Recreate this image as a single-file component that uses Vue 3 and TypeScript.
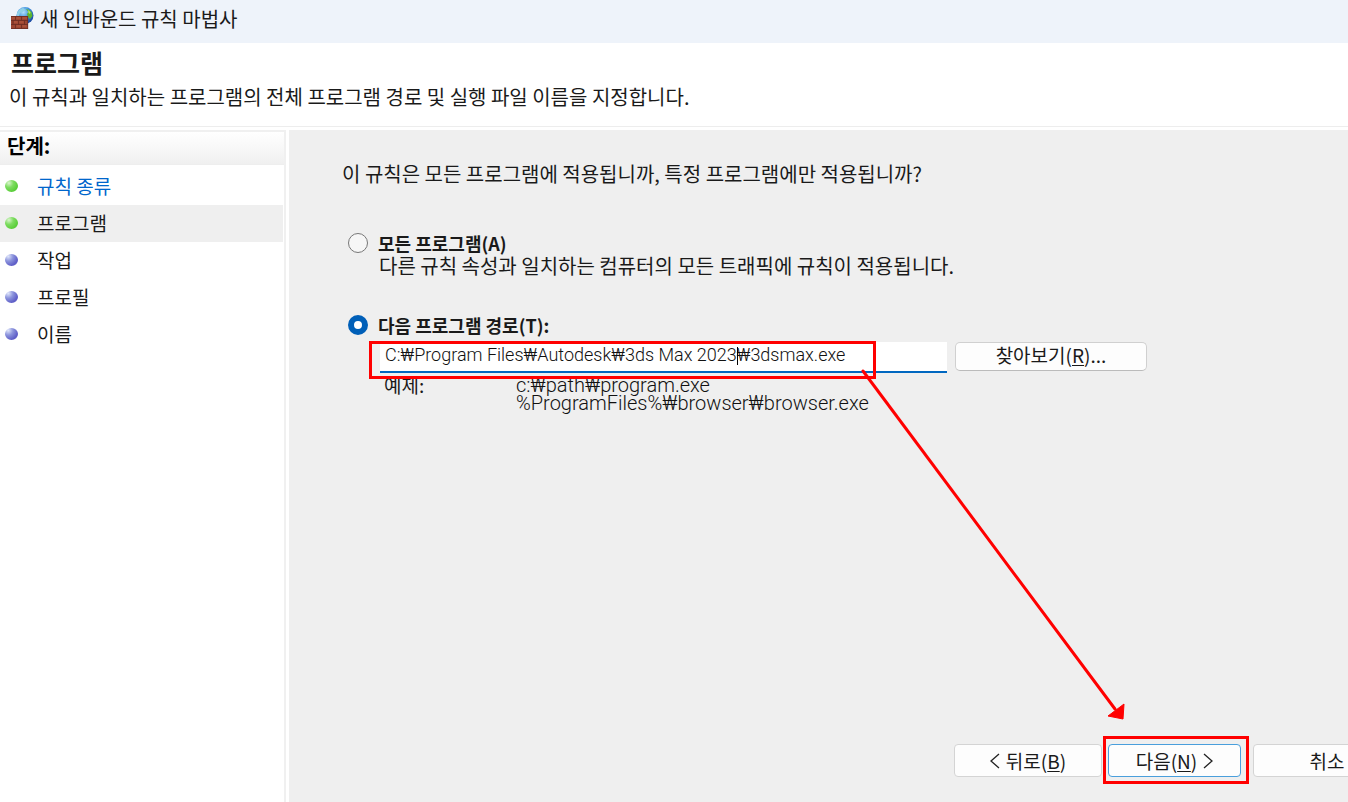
<script setup lang="ts">
import { ref } from 'vue'

interface Step {
  label: string
  state: 'done' | 'todo'
  link?: boolean
  current?: boolean
}

const steps: Step[] = [
  { label: '규칙 종류', state: 'done', link: true },
  { label: '프로그램', state: 'done', current: true },
  { label: '작업', state: 'todo' },
  { label: '프로필', state: 'todo' },
  { label: '이름', state: 'todo' },
]

const target = ref<'all' | 'path'>('path')
const programPath = ref('C:₩Program Files₩Autodesk₩3ds Max 2023₩3dsmax.exe')
</script>

<template>
  <div class="wizard">
    <header class="titlebar">
      <svg class="app-icon" viewBox="0 0 24 24" aria-hidden="true">
        <defs>
          <radialGradient id="globe" cx="0.4" cy="0.3" r="0.75">
            <stop offset="0" stop-color="#b4e2fb" />
            <stop offset="0.5" stop-color="#3a8fdb" />
            <stop offset="1" stop-color="#123a96" />
          </radialGradient>
        </defs>
        <circle cx="15" cy="8.500" r="8.500" fill="url(#globe)" />
        <path d="M7 6 Q9 2 13 1 L15 2.500 L13 5 L10 6 L9 9 L7 9Z" fill="#8fd0e8" />
        <path d="M16 2 Q19 2 21.500 5 L22.500 9 L20 12 L18 10 L17 7 L18.500 5Z" fill="#5cb531" />
        <path d="M18 3 L20.500 5 L20 7 L18.500 6Z" fill="#b5e36b" />
        <rect x="1" y="9" width="17" height="13" fill="#9c4531" />
        <path d="M1 9.500H18M1 13.500H18M1 17.500H18M1 21.500H18M5.500 9.500V13M11.500 9.500V13M3 13.500V17.500M8.500 13.500V17.500M14.500 13.500V17.500M5.500 17.500V21.500M11.500 17.500V21.500M17.700 9V22" stroke="#6a2c22" stroke-width="0.8" fill="none" />
        <path d="M2 11H5M6.500 11H10.500M12.500 11H17M4 15H7.500M9.500 15H13.500M6.500 19H10.500M12.500 19H16.500" stroke="#bd6248" stroke-width="0.8" />
      </svg>
      <span class="title">새 인바운드 규칙 마법사</span>
    </header>

    <section class="heading">
      <h1>프로그램</h1>
      <p>이 규칙과 일치하는 프로그램의 전체 프로그램 경로 및 실행 파일 이름을 지정합니다.</p>
    </section>

    <div class="body">
      <nav class="steps" aria-label="단계">
        <h2>단계:</h2>
        <ul>
          <li v-for="step in steps" :key="step.label" :class="{ current: step.current }">
            <span class="dot" :class="step.state"></span>
            <a v-if="step.link" href="#">{{ step.label }}</a>
            <span v-else>{{ step.label }}</span>
          </li>
        </ul>
      </nav>

      <main class="content">
        <p class="question">이 규칙은 모든 프로그램에 적용됩니까, 특정 프로그램에만 적용됩니까?</p>

        <div class="option first">
          <input id="all" v-model="target" type="radio" name="target" value="all" />
          <label for="all">모든 프로그램(A)</label>
        </div>
        <p class="hint">다른 규칙 속성과 일치하는 컴퓨터의 모든 트래픽에 규칙이 적용됩니다.</p>

        <div class="option second">
          <input id="path" v-model="target" type="radio" name="target" value="path" />
          <label for="path">다음 프로그램 경로(T):</label>
        </div>

        <div class="path-row">
          <div class="field">
            <input v-model="programPath" type="text" aria-label="프로그램 경로" spellcheck="false" />
            <span class="caret"></span>
            <span class="mark mark-path"></span>
          </div>
          <button type="button" class="browse"><span>찾아보기(<u>R</u>)...</span></button>
        </div>

        <dl class="examples">
          <dt>예제:</dt>
          <dd>c:₩path₩program.exe<br />%ProgramFiles%₩browser₩browser.exe</dd>
        </dl>

        <footer class="actions">
          <button type="button" class="back">
            <svg viewBox="0 0 10 16" aria-hidden="true"><path d="M9 1L1 8L9 15" /></svg>
            <span>뒤로(<u>B</u>)</span>
          </button>
          <div class="next-wrap">
            <button type="button" class="next">
              <span>다음(<u>N</u>)</span>
              <svg viewBox="0 0 10 16" aria-hidden="true"><path d="M1 1L9 8L1 15" /></svg>
            </button>
            <span class="mark mark-next"></span>
          </div>
          <button type="button" class="cancel">취소</button>
        </footer>

        <svg class="arrow" viewBox="0 0 264 352" aria-hidden="true">
          <path d="M2 2L254 340" stroke="#ff0000" stroke-width="3" fill="none" stroke-linecap="round" />
          <path d="M247 347L263 335L262 350Z" fill="#ff0000" stroke="#ff0000" />
        </svg>
      </main>
    </div>
  </div>
</template>

<style>
html,
body,
#app {
  height: 100%;
}
body {
  margin: 0;
  overflow: hidden;
}
</style>

<style scoped>
* {
  box-sizing: border-box;
}
.wizard {
  display: flex;
  flex-direction: column;
  height: 100%;
  overflow: hidden;
  background: #fff;
  color: #1a1a1a;
  font: 20px/28px "Noto Sans CJK KR", sans-serif;
}
h1,
h2,
p,
ul,
dl,
dd {
  margin: 0;
  padding: 0;
}
.titlebar {
  display: flex;
  align-items: center;
  gap: 6px;
  height: 43px;
  padding: 0 10px 6px;
  background: #eef3fa;
}
.app-icon {
  width: 24px;
  height: 24px;
}
.heading {
  height: 84px;
  padding: 5px 9px 0;
  border-bottom: 1px solid #ededed;
}
h1 {
  padding-left: 2px;
  font-size: 25px;
  line-height: 28px;
  font-weight: 700;
}
.heading p {
  margin-top: 7px;
}
.body {
  display: flex;
  flex: 1;
  min-height: 0;
  padding-top: 3px;
}
.steps {
  flex: none;
  width: 286px;
  margin-right: 3px;
  border-top: 2px solid #f0f0f0;
  border-right: 2px solid #f0f0f0;
}
h2 {
  height: 33px;
  padding-left: 7px;
  border-bottom: 1px solid #eee;
  background: linear-gradient(#fff, #f0f0f0);
  font-size: 20px;
  line-height: 28px;
  font-weight: 700;
  color: #000;
}
ul {
  padding-top: 3px;
  list-style: none;
  font-size: 19px;
}
li {
  display: flex;
  align-items: center;
  gap: 19px;
  height: 37px;
  margin-right: 1px;
  padding: 0 0 2px 5px;
}
li.current {
  background: #efefef;
}
li a {
  color: #0066cc;
  text-decoration: none;
}
.dot {
  width: 13px;
  height: 12px;
  border-radius: 50%;
}
.dot.done {
  background: radial-gradient(circle at 30% 25%, #d9f5cc 0, #7ddc60 35%, #57cc36 75%);
}
.dot.todo {
  background: radial-gradient(circle at 25% 20%, #dfe6fb 0, #8b93dc 35%, #6060c8 70%);
}
.content {
  position: relative;
  display: flex;
  flex-direction: column;
  flex: 1;
  min-width: 0;
  padding: 30px 0 0 53px;
  background: #efefef;
}
.option {
  display: flex;
  align-items: center;
  gap: 10px;
  height: 24px;
  padding-left: 6px;
}
.option.first {
  margin-top: 43px;
}
.option.second {
  margin-top: 36px;
}
.option label {
  font: 700 18px/24px "Noto Sans CJK KR", sans-serif;
}
input[type="radio"] {
  appearance: none;
  width: 20px;
  height: 20px;
  margin: 0;
  border: 1px solid #777;
  border-radius: 50%;
  background: #f6f6f6;
}
input[type="radio"]:checked {
  border: 6px solid #005fb8;
  background: #fff;
}
.hint {
  padding-left: 37px;
  line-height: 22px;
}
.path-row {
  display: flex;
  gap: 8px;
  margin-top: 5px;
  padding-left: 38px;
}
.field {
  position: relative;
  width: 567px;
  height: 31px;
}
.field input {
  display: block;
  width: 100%;
  height: 31px;
  padding: 0 5px 4px;
  border: 0;
  border-bottom: 2px solid #0067c0;
  outline: 0;
  background: #fff;
  color: #111;
  font: 300 18px/24px Roboto, "Noto Sans CJK KR", sans-serif;
}
.caret {
  position: absolute;
  left: 357px;
  top: 5px;
  width: 1px;
  height: 18px;
  background: #000;
}
.mark {
  position: absolute;
  border: 3px solid #ff0000;
  pointer-events: none;
}
.mark-path {
  left: -11px;
  top: -1px;
  width: 507px;
  height: 38px;
}
.mark-next {
  inset: -8px -8px -7px -5px;
}
button {
  display: flex;
  align-items: center;
  justify-content: center;
  margin: 0;
  padding: 0;
  border: 1px solid #d4d4d4;
  border-radius: 4px;
  background: #fdfdfd;
  color: #1a1a1a;
  font: 19px/24px "Noto Sans CJK KR", sans-serif;
}
u {
  text-underline-offset: 2px;
  text-decoration-thickness: 1px;
}
.browse {
  width: 192px;
  height: 29px;
  padding-bottom: 4px;
  border-color: #d0d0d0;
  border-bottom-color: #bbb;
  border-radius: 5px;
}
.examples {
  display: flex;
  margin-top: 3px;
  padding-left: 42px;
  line-height: 18px;
}
dt {
  width: 132px;
  font-size: 19px;
}
dd {
  color: #111;
  font: 300 20px/18px Roboto, "Noto Sans CJK KR", sans-serif;
}
.actions {
  display: flex;
  justify-content: flex-end;
  margin: auto -53px 25px 0;
}
.actions button {
  width: 148px;
  height: 33px;
  gap: 6px;
}
.actions svg {
  width: 10px;
  height: 16px;
  fill: none;
  stroke: #222;
  stroke-width: 1.3;
}
.next-wrap {
  position: relative;
  margin: 0 12px 0 6px;
}
.actions .next {
  width: 133px;
  border-color: #4a9fdc;
}
.arrow {
  position: absolute;
  left: 572px;
  top: 239px;
  width: 264px;
  height: 352px;
  pointer-events: none;
}
</style>
